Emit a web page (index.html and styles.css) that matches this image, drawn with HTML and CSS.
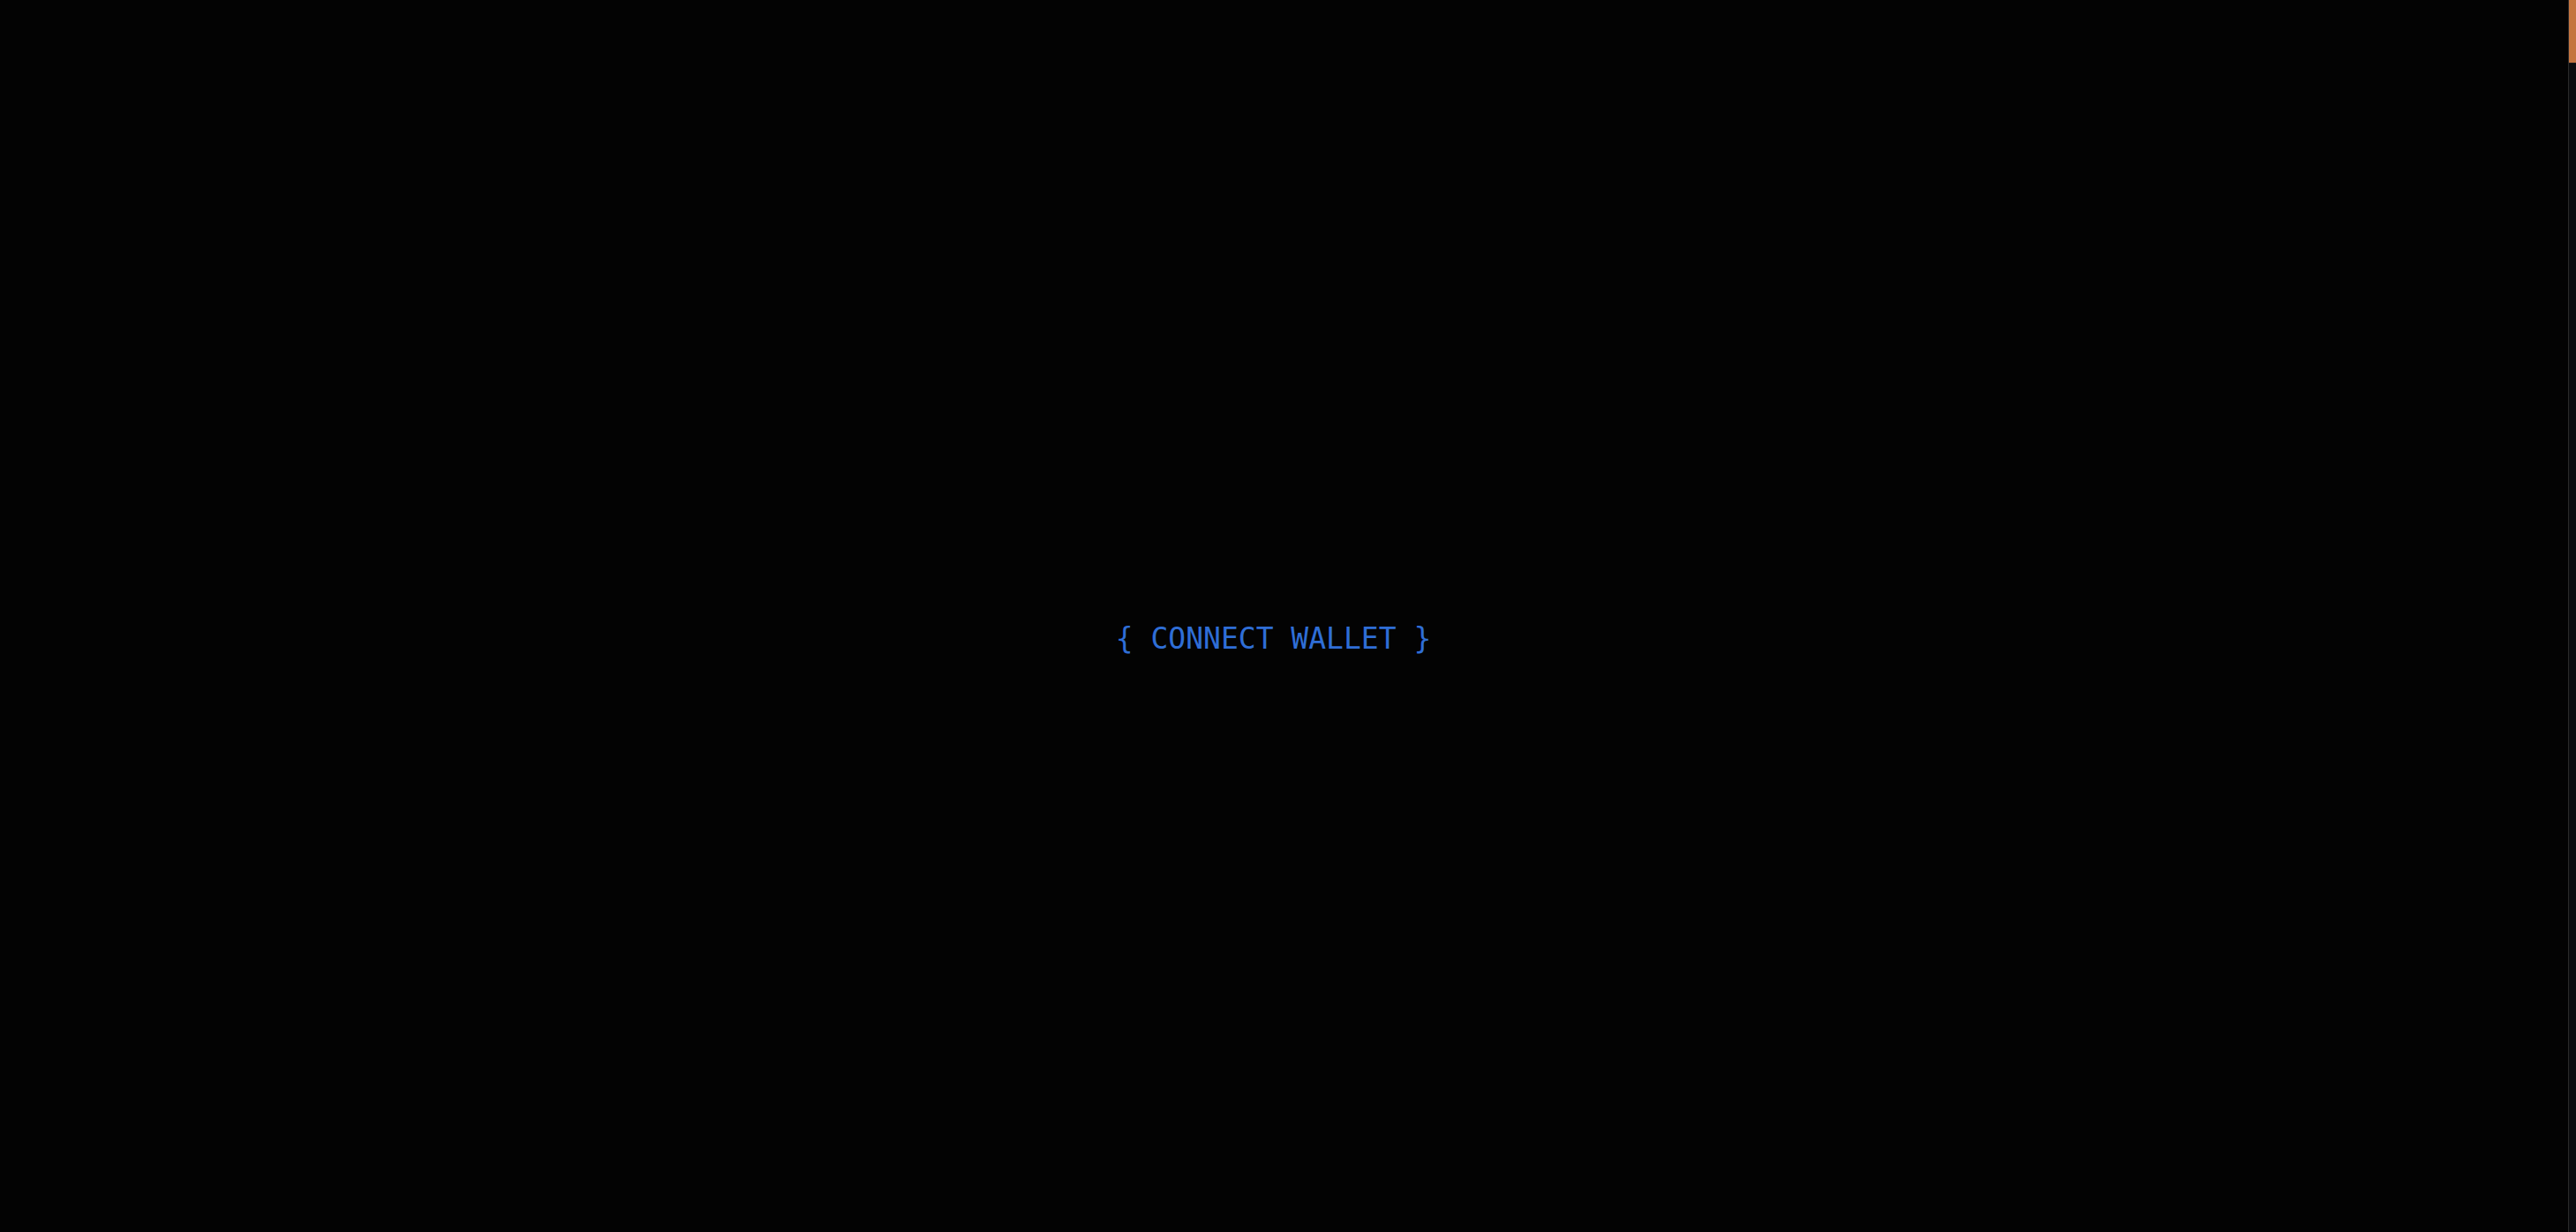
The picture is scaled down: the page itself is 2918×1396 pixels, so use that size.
FILE: index.html
```html
<!DOCTYPE html>
<html lang="en">
<head>
<meta charset="utf-8">
<title>Connect Wallet</title>
<link rel="stylesheet" href="styles.css">
</head>
<body>
<main class="hero">
  <button class="connect">{ CONNECT WALLET }</button>
</main>
<div class="scrollbar" aria-hidden="true"><div class="scrollbar-thumb"></div></div>
</body>
</html>
```
FILE: styles.css
```css
html, body {
  margin: 0;
  padding: 0;
  height: 100%;
  background: #030303;
  overflow: hidden;
}
.hero {
  height: 100vh;
  box-sizing: border-box;
  display: flex;
  align-items: center;
  justify-content: center;
  padding-top: 50px;
  padding-right: 33px;
}
.connect {
  background: none;
  border: none;
  padding: 0;
  margin: 0;
  cursor: pointer;
  font-family: "DejaVu Sans Mono", "Liberation Mono", monospace;
  font-size: 33px;
  line-height: 1;
  color: #2f6ed6;
}
.scrollbar {
  position: fixed;
  top: 0;
  right: 0;
  width: 8px;
  height: 100vh;
  background: #0c0d0f;
  border-left: 1px solid #2a2a2a;
}
.scrollbar-thumb {
  height: 71px;
  background: #c47440;
  border-bottom: 1px solid #1a1a1a;
}
```
